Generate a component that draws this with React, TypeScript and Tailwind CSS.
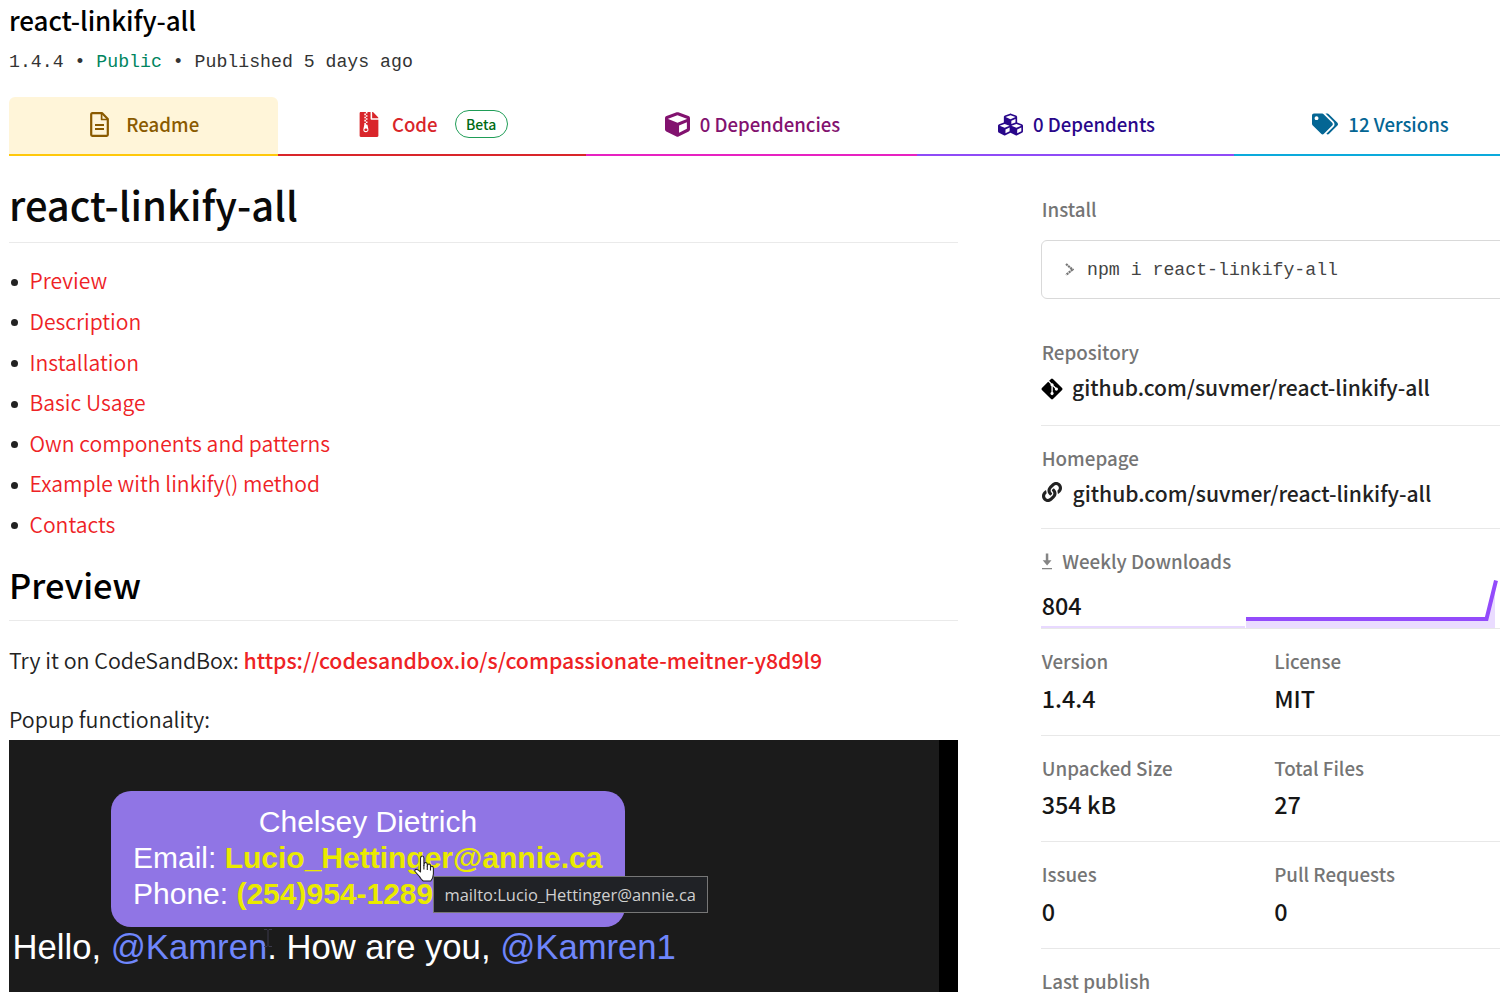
import type { ReactNode } from "react";
import { FaCube, FaCubes, FaTags, FaGitAlt, FaLink, FaFileArchive } from "react-icons/fa";

function DocIcon() {
  return (
    <svg viewBox="0 0 19 25" className="h-[25px] w-[19px]" fill="none" stroke="currentColor" strokeWidth="2.2" strokeLinejoin="round">
      <path d="M1.200 2.200a1 1 0 0 1 1-1h10l5.600 5.800v15.800a1 1 0 0 1-1 1H2.200a1 1 0 0 1-1-1Z" />
      <path d="M11.600 1.500v6h6" strokeWidth="1.700" />
      <path d="M5 13h9M5 17h9" strokeWidth="1.900" />
    </svg>
  );
}

function DownloadIcon() {
  return (
    <svg viewBox="0 0 10 17" className="h-[17px] w-[10px]" fill="#858585">
      <path d="M3.800 0.500h2.500v6.700H9.500L5.100 12.500 0.700 7.200H3.800ZM0 15h10v1.300H0Z" />
    </svg>
  );
}

function HandCursor() {
  return (
    <svg viewBox="0 0 20 27" className="absolute left-[405px] top-[115px] h-[27px] w-[20px]" fill="#fff" stroke="#222" strokeWidth="1.100" strokeLinejoin="round">
      <path d="M6.500 17V3Q6.700 1 8.200 1Q9.800 1 9.900 3V10.500Q10.200 7.300 11.800 7.500Q13.300 7.700 13.300 9.500V11.200Q13.800 8.700 15.200 9Q16.600 9.300 16.500 11V12.600Q17.200 10.700 18.500 11.400Q19.500 12 19.400 14V19Q19.200 23 16.800 26H9.200Q7 24.500 5.500 21.500L1 16.500Q0.500 14.500 2.200 14.300Q4.200 14.300 6.500 17Z" />
      <path d="M9.900 10v4.500M13.300 11v4M16.500 12.400v3.200" fill="none" />
    </svg>
  );
}

function Tab({ className, children }: { className: string; children: ReactNode }) {
  return (
    <a className={`flex h-[59px] shrink-0 items-center justify-center border-b-2 pb-[3px] text-[18.600px] font-medium ${className}`}>
      {children}
    </a>
  );
}

function Label({ children }: { children: ReactNode }) {
  return <h3 className="flex h-7 items-center pl-[0.700px] text-[18.750px] font-medium leading-7 text-[#757575]">{children}</h3>;
}

const links = [
  "Preview",
  "Description",
  "Installation",
  "Basic Usage",
  "Own components and patterns",
  "Example with linkify() method",
  "Contacts",
];

function Pair({ items, valueClass, className }: { items: [string, string][]; valueClass: string; className: string }) {
  return (
    <div className={`flex border-b border-[#e8e8e8] pt-[18px] ${className}`}>
      {items.map(([label, value]) => (
        <div key={label} className="w-[232.500px] shrink-0">
          <Label>{label}</Label>
          <p className={`flex items-center pl-[0.700px] pt-[2px] text-[23.400px] font-medium text-[#161616] ${valueClass}`}>{value}</p>
        </div>
      ))}
    </div>
  );
}

export default function App() {
  return (
    <div className="h-[998px] w-full overflow-hidden bg-white font-['Noto_Sans_CJK_SC','Noto_Sans',sans-serif] text-[#222]">
      <header className="flex h-[97px] flex-col pl-[9px]">
        <h1 className="h-10 text-[26px] font-medium leading-[40px] tracking-[-0.080px] text-black">react-linkify-all</h1>
        <p className="mt-[11px] whitespace-pre font-['Liberation_Mono',monospace] text-[18.200px] leading-[22px] text-[#333]">
          1.4.4 • <span className="text-[#00855f]">Public</span> • Published 5 days ago
        </p>
      </header>

      <nav className="flex pl-[9px]">
        <Tab className="w-[269px] gap-[17.500px] rounded-t-md border-[#ffc80b] bg-[#fff5d9] pl-[2px] text-[#8a5a00]">
          <DocIcon />
          <span className="tracking-[0.050px]">Readme</span>
        </Tab>
        <Tab className="w-[308px] border-[#d9252a] pl-[3px] text-[#d9252a]">
          <FaFileArchive className="mr-[12.500px] h-[25px] w-[20px]" />
          Code
          <span className="ml-[17px] flex h-7 w-[53px] items-center justify-center rounded-full border border-[#1f9d57] text-[14px] text-[#006b14]">
            Beta
          </span>
        </Tab>
        <Tab className="w-[331px] gap-2.5 border-[#e722c1] pl-[2px] text-[#82126f]">
          <FaCube className="size-[25px]" />0 Dependencies
        </Tab>
        <Tab className="w-[317px] gap-2.5 border-[#8f4bf7] pl-[2px] text-[#29078a]">
          <FaCubes className="size-[25px]" />0 Dependents
        </Tab>
        <Tab className="w-[293px] gap-2.5 border-[#0caadc] text-[#046694]">
          <FaTags className="size-[26px]" />
          12 Versions
        </Tab>
      </nav>

      <div className="flex pl-[9px]">
        <main className="w-[949px] shrink-0">
          <h1 className="mt-[9px] h-[78px] border-b border-[#eaeaea] text-[39.900px] font-medium leading-[77px] text-[#0a0a0a]">
            react-linkify-all
          </h1>
          <ul className="mt-[17px]">
            {links.map((l) => (
              <li key={l} className="flex h-[40.600px] items-center text-[21.140px] font-[350] text-[#ee2225]">
                <span className="ml-[2px] mr-[11.500px] mt-[4px] size-[7px] rounded-full bg-[#222]" />
                {l}
              </li>
            ))}
          </ul>
          <h2 className="mt-[4px] h-[73px] border-b border-[#eaeaea] text-[34.400px] font-medium leading-[72px] text-black">
            Preview
          </h2>
          <p className="mt-[19px] h-10 whitespace-nowrap text-[21.440px] font-[350] leading-[40px]">
            Try it on CodeSandBox: <a className="text-[21.260px] font-medium text-[#ee2225]">https://codesandbox.io/s/compassionate-meitner-y8d9l9</a>
          </p>
          <p className="mt-[19px] h-10 text-[21.440px] font-[350] leading-[40px]">Popup functionality:</p>

          <div className="relative mt-px h-[252px] overflow-hidden border-r-[19px] border-black bg-[#1b1b1b] font-['Liberation_Sans',sans-serif] text-white">
            <div className="absolute left-[102px] top-[51px] h-[136px] w-[514px] whitespace-nowrap rounded-[20px] bg-[#9075e5] px-[22px] pt-[13px] text-[30px] leading-[36px]">
              <p className="text-center">Chelsey Dietrich</p>
              <p>
                Email: <b className="text-[#eaea00]">Lucio_Hettinger@annie.ca</b>
              </p>
              <p>
                Phone: <b className="text-[#eaea00]">(254)954-1289</b>
              </p>
            </div>
            <p className="absolute left-[3.500px] top-[187px] whitespace-nowrap text-[34.650px] leading-[40px]">
              Hello, <span className="text-[#6f86fb]">@Kamren</span>. How are you, <span className="text-[#6f86fb]">@Kamren1</span>
            </p>
            <svg viewBox="0 0 8 18" className="absolute left-[255px] top-[189px] h-[18px] w-[8px]" fill="none" stroke="#3c3a4c">
              <path d="M0 .500h3l1 1 1-1h3M4 1.500v15M0 17.500h3l1-1 1 1h3" />
            </svg>
            <div className="absolute left-[424px] top-[136px] flex h-[37px] w-[275px] items-center whitespace-nowrap border border-[#777] bg-[#202226] pl-[10.500px] pt-px font-['Open_Sans',sans-serif] text-[16.450px] text-[#d0d0d0]">
              mailto:Lucio_Hettinger@annie.ca
            </div>
            <HandCursor />
          </div>
        </main>

        <aside className="ml-[83px] w-[500px] shrink-0 pt-[39px]">
          <Label>Install</Label>
          <div className="mt-[17px] flex h-[59px] items-center rounded-md border border-[#d9d9d9] pl-[23px] font-['Liberation_Mono',monospace] text-[18.200px] text-[#444]">
            <svg viewBox="0 0 9 13" className="mr-[13px] h-[13px] w-[9px]" fill="none" stroke="#777" strokeWidth="2.200">
              <path d="M1 1l6.500 5.500L1 12" strokeDasharray="2.200 .6" />
            </svg>
            <span className="pt-[3px]">npm i react-linkify-all</span>
          </div>

          <section className="mt-[39px] border-b border-[#e8e8e8] pb-[17px]">
            <Label>Repository</Label>
            <a className="flex h-[42px] items-center gap-[10px] pt-px text-[21.060px] font-medium">
              <FaGitAlt className="-ml-px mr-[-2px] mt-[2px] size-[24px] text-black" />
              github.com/suvmer/react-linkify-all
            </a>
          </section>
          <section className="border-b border-[#e8e8e8] pb-[13px] pt-[18px]">
            <Label>Homepage</Label>
            <a className="flex h-[43px] items-center gap-[10.500px] pt-px text-[21.100px] font-medium">
              <FaLink className="mb-[4px] ml-px size-[20px]" />
              github.com/suvmer/react-linkify-all
            </a>
          </section>
          <section className="border-b border-[#e8e8e8] pt-[18px]">
            <Label>
              <span className="mr-[10.500px]">
                <DownloadIcon />
              </span>
              Weekly Downloads
            </Label>
            <div className="flex h-[53px] items-end">
              <div className="flex h-[53px] w-[204px] items-center border-b-2 border-[#e8d9ff] pl-[0.700px] pt-[10px] text-[23.400px] font-medium text-[#161616]">
                804
              </div>
              <svg viewBox="0 0 254 52" className="h-[52px] w-[254px]">
                <path d="M1 44H241L250 5V52H1Z" fill="#eadcff" />
                <path d="M1 43H241.500L251 4.500" fill="none" stroke="#934bfb" strokeWidth="4" />
              </svg>
            </div>
          </section>
          <Pair className="h-[107px]" valueClass="h-[46px]" items={[["Version", "1.4.4"], ["License", "MIT"]]} />
          <Pair className="h-[106px]" valueClass="h-[44px]" items={[["Unpacked Size", "354 kB"], ["Total Files", "27"]]} />
          <Pair className="h-[107px]" valueClass="h-[46px]" items={[["Issues", "0"], ["Pull Requests", "0"]]} />
          <section className="pt-[18px]">
            <Label>Last publish</Label>
          </section>
        </aside>
      </div>
    </div>
  );
}
